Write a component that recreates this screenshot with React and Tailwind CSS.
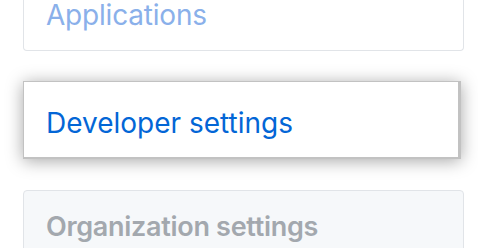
import React from 'react'

const font = { fontFamily: 'Inter, "Noto Sans", sans-serif' }

export default function App() {
  return (
    <div className="h-[248px] w-[478px] overflow-hidden bg-white" style={font}>
      <div className="ml-[23px] w-[441px]">
        <div className="rounded-b-[4px] border-x border-b border-[#e1e4e8] bg-white px-[22px] pt-[1px] pb-[21px]">
          <span className="block text-[28px] leading-[28px] tracking-[-0.2px] text-[#8ab0ea]">Applications</span>
        </div>

        <div className="mt-[30px] mr-[3px] border border-r-[3px] border-b-[2px] border-[#c2c2c2] bg-white px-[22px] pt-[27px] pb-[20px] shadow-[0_2px_16px_rgba(0,0,0,0.35)]">
          <span className="block text-[28px] leading-[28px] text-[#0366d6]">Developer settings</span>
        </div>

        <div className="mt-[31px] rounded-t-[4px] border border-[#e1e4e8] bg-[#f6f8fa] px-[22px] pt-[22px] pb-[20px]">
          <span className="block text-[27px] font-semibold leading-[27px] tracking-[-0.3px] text-[#a3a8ae]">Organization settings</span>
        </div>
      </div>
    </div>
  )
}
